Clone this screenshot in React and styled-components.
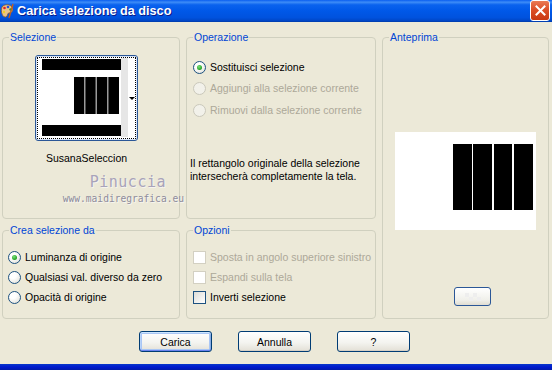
import styled, { createGlobalStyle } from "styled-components";

const GlobalStyle = createGlobalStyle`
  html, body { margin: 0; padding: 0; }
  body {
    width: 552px;
    height: 370px;
    overflow: hidden;
    background: #ece9d8;
    font-family: "Liberation Sans", Arial, sans-serif;
  }
`;

const Window = styled.div`
  position: relative;
  display: flex;
  flex-direction: column;
  height: 370px;
`;

const TitleBar = styled.div`
  flex-shrink: 0;
  height: 22px;
  display: flex;
  align-items: center;
  padding-right: 2px;
  background: linear-gradient(
    to bottom,
    #0a5ef0 0%,
    #3d8cf7 10%,
    #0a62ee 22%,
    #0058e8 50%,
    #0052de 80%,
    #0046c6 94%,
    #003aa8 100%
  );
`;

const AppIcon = styled.svg`
  width: 14px;
  height: 16px;
  margin-left: 0;
`;

const TitleText = styled.span`
  flex: 1;
  margin-left: 3px;
  color: #fff;
  font-size: 12.7px;
  font-weight: bold;
  text-shadow: 1px 1px 0 #0a1a8a;
`;

const CloseButton = styled.div`
  width: 18px;
  height: 19px;
  margin-top: -2px;
  border: 1px solid #fff;
  border-radius: 3px;
  background: linear-gradient(to bottom, #ea7a55, #dc4f28 45%, #c93812);
  display: flex;
  align-items: center;
  justify-content: center;
`;

const Body = styled.div`
  flex: 1;
  display: flex;
  flex-direction: column;
  padding: 9px 5px 0 2px;
`;

const Grid = styled.div`
  display: grid;
  grid-template-columns: 178px 190px 167px;
  grid-template-rows: 188px 95px;
  column-gap: 6px;
  row-gap: 5px;
`;

const Group = styled.fieldset`
  grid-column: ${(p) => p.$col};
  grid-row: ${(p) => p.$row};
  margin: 0;
  padding: 0;
  min-width: 0;
  border: 1px solid #d0d0bf;
  border-radius: 4px;
  display: flex;
  flex-direction: column;
  align-items: ${(p) => p.$align || "stretch"};
`;

const Legend = styled.legend`
  margin-left: 6px;
  padding: 0 1px;
  font-size: 10.5px;
  line-height: 13px;
  color: #0046d5;
`;

const ThumbColumn = styled.div`
  display: flex;
  flex-direction: column;
  align-items: center;
  align-self: flex-start;
  margin: 11px 0 0 32px;
  width: 103px;
`;

const ThumbBox = styled.div`
  width: 103px;
  height: 86px;
  box-sizing: border-box;
  padding: 1px;
  border: 1px solid #2b5797;
  border-radius: 3px;
  background: #fff;
  box-shadow: inset 0 0 0 1px #d6e2f5;
`;

const DottedFrame = styled.div`
  height: 100%;
  box-sizing: border-box;
  border: 1px dotted #000;
  display: flex;
`;

const ArrowCol = styled.div`
  flex: 1;
  display: flex;
  align-items: center;
  justify-content: center;
  &::after {
    content: "";
    border-left: 3px solid transparent;
    border-right: 3px solid transparent;
    border-top: 3px solid #000;
  }
`;

const ThumbName = styled.div`
  margin-top: 11px;
  font-size: 10.5px;
  line-height: 13px;
  color: #000;
`;

const OptionList = styled.div`
  display: flex;
  flex-direction: column;
  gap: ${(p) => p.$gap}px;
  padding: ${(p) => p.$top}px 0 0 ${(p) => p.$left}px;
`;

const Option = styled.div`
  display: flex;
  align-items: center;
  gap: 4px;
  height: 13px;
  font-size: 10.5px;
  line-height: 13px;
  white-space: nowrap;
  color: ${(p) => (p.$disabled ? "#aca899" : "#000")};
`;

const Radio = styled.span`
  flex-shrink: 0;
  width: 13px;
  height: 13px;
  box-sizing: border-box;
  border-radius: 50%;
  border: 1px solid ${(p) => (p.$disabled ? "#cac8bb" : "#1c5180")};
  background: ${(p) =>
    p.$disabled
      ? "#f2f1ea"
      : "radial-gradient(circle at 35% 30%, #ffffff 30%, #dcdcd3 100%)"};
  display: flex;
  align-items: center;
  justify-content: center;
  &::after {
    content: "";
    display: ${(p) => (p.$checked ? "block" : "none")};
    width: 5px;
    height: 5px;
    border-radius: 50%;
    background: radial-gradient(circle at 40% 35%, #7be07b, #21a121 70%);
  }
`;

const Check = styled.span`
  flex-shrink: 0;
  width: 13px;
  height: 13px;
  box-sizing: border-box;
  border: 1px solid ${(p) => (p.$disabled ? "#d3d0c2" : "#1c5180")};
  background: ${(p) =>
    p.$disabled ? "#fff" : "linear-gradient(135deg, #dcdcd7, #ffffff)"};
`;

const InfoText = styled.div`
  margin: 40px 0 0 3px;
  font-size: 10.5px;
  line-height: 13px;
  color: #000;
`;

const PreviewBox = styled.svg`
  margin-top: 88px;
  width: 141px;
  height: 98px;
  display: block;
`;

const SmallButton = styled.div`
  margin: 57px 0 0 14px;
  width: 37px;
  height: 19px;
  box-sizing: border-box;
  border: 1px solid #2b5797;
  border-radius: 3px;
  background: linear-gradient(to bottom, #ffffff, #f0f0ea 70%, #e0ddd2);
  display: flex;
  align-items: center;
  justify-content: center;
`;

const ButtonRow = styled.div`
  display: flex;
  justify-content: center;
  gap: 26px;
  margin-top: 12px;
`;

const DlgButton = styled.button`
  width: 73px;
  height: 21px;
  padding: 0;
  font-family: "Liberation Sans", Arial, sans-serif;
  font-size: 10.5px;
  color: #000;
  border: 1px solid #003c74;
  border-radius: 3px;
  background: linear-gradient(to bottom, #ffffff, #f4f4f0 55%, #e3e0d6);
  box-shadow: ${(p) =>
    p.$primary
      ? "inset 0 1px 0 #cee7ff, inset 0 -1px 0 #6982ee, inset 1px 0 0 #b8d3f9, inset -1px 0 0 #89ade4, inset 0 0 0 2px #a9c6f5"
      : "inset 0 -1px 0 #d6d0c5"};
`;

const BottomFrame = styled.div`
  margin-top: auto;
  height: 6px;
  background: linear-gradient(to bottom, #0838c8, #0019cf 50%, #001aa8);
`;

const Watermark = styled.div`
  position: absolute;
  left: 62px;
  top: 172px;
  width: 122px;
  display: flex;
  flex-direction: column;
  align-items: flex-end;
  font-family: "DejaVu Sans Mono", "Liberation Mono", monospace;
  pointer-events: none;
`;

const WatermarkName = styled.span`
  margin-right: 18px;
  font-size: 15px;
  line-height: 20px;
  letter-spacing: 0.5px;
  color: #a8a3ba;
  text-shadow: 1px 1px 0 #f6f4ee;
`;

const WatermarkUrl = styled.span`
  font-size: 9.6px;
  line-height: 13px;
  color: #8e8c9c;
  text-shadow: 1px 1px 0 #f8f6f0;
`;

function ThumbImage() {
  return (
    <svg width="90" height="79" viewBox="0 0 90 79">
      <rect width="90" height="79" fill="#fff" />
      <rect x="83" y="0" width="7" height="79" fill="#e6e6e6" />
      <rect x="4" y="1" width="79" height="11" fill="#000" />
      <rect x="36" y="19" width="45" height="37" fill="#9a9a9a" />
      <rect x="36" y="19" width="10" height="37" fill="#000" />
      <rect x="47.5" y="19" width="10" height="37" fill="#000" />
      <rect x="59" y="19" width="10" height="37" fill="#000" />
      <rect x="70.5" y="19" width="10.5" height="37" fill="#000" />
      <rect x="4" y="67" width="79" height="11" fill="#000" />
    </svg>
  );
}

export default function App() {
  return (
    <Window>
      <GlobalStyle />
      <TitleBar>
        <AppIcon viewBox="0 0 14 16">
          <path
            d="M2 4 C4 1 10 1 12 4 C14 7 12 10 9 10 C7 10 8 13 6 14 C3 15 0 9 2 4 Z"
            fill="#e8c48a"
            stroke="#8a5a2a"
            strokeWidth="0.8"
          />
          <circle cx="4.5" cy="5" r="1.3" fill="#e02020" />
          <circle cx="8" cy="4" r="1.3" fill="#2050e0" />
          <circle cx="10.5" cy="6.5" r="1.2" fill="#20a030" />
          <circle cx="4" cy="9" r="1.2" fill="#f0d020" />
          <path d="M9 15 L13 1" stroke="#c06020" strokeWidth="1.4" />
        </AppIcon>
        <TitleText>Carica selezione da disco</TitleText>
        <CloseButton>
          <svg width="11" height="11" viewBox="0 0 11 11">
            <path
              d="M1.5 1.5 L9.5 9.5 M9.5 1.5 L1.5 9.5"
              stroke="#fff"
              strokeWidth="2"
              strokeLinecap="square"
            />
          </svg>
        </CloseButton>
      </TitleBar>

      <Body>
        <Grid>
          <Group $col={1} $row={1}>
            <Legend>Selezione</Legend>
            <ThumbColumn>
              <ThumbBox>
                <DottedFrame>
                  <ThumbImage />
                  <ArrowCol />
                </DottedFrame>
              </ThumbBox>
              <ThumbName>SusanaSeleccion</ThumbName>
            </ThumbColumn>
          </Group>

          <Group $col={2} $row={1}>
            <Legend>Operazione</Legend>
            <OptionList $gap={8.5} $top={16.5} $left={6}>
              <Option>
                <Radio $checked />
                Sostituisci selezione
              </Option>
              <Option $disabled>
                <Radio $disabled />
                Aggiungi alla selezione corrente
              </Option>
              <Option $disabled>
                <Radio $disabled />
                Rimuovi dalla selezione corrente
              </Option>
            </OptionList>
            <InfoText>
              Il rettangolo originale della selezione
              <br />
              intersecherà completamente la tela.
            </InfoText>
          </Group>

          <Group $col={3} $row="1 / span 2" $align="center">
            <Legend>Anteprima</Legend>
            <PreviewBox viewBox="0 0 141 98">
              <rect width="141" height="98" fill="#fff" />
              <rect x="58" y="12" width="19" height="66" fill="#000" />
              <rect x="78" y="12" width="19" height="66" fill="#000" />
              <rect x="99" y="12" width="18" height="66" fill="#000" />
              <rect x="119" y="12" width="19" height="66" fill="#000" />
            </PreviewBox>
            <SmallButton>
              <svg width="16" height="8" viewBox="0 0 16 8">
                <rect x="0" y="0" width="4" height="4" fill="#eeeeee" />
                <rect x="8" y="0" width="4" height="4" fill="#eeeeee" />
                <rect x="4" y="4" width="4" height="4" fill="#eeeeee" />
                <rect x="12" y="4" width="4" height="4" fill="#eeeeee" />
              </svg>
            </SmallButton>
          </Group>

          <Group $col={1} $row={2}>
            <Legend>Crea selezione da</Legend>
            <OptionList $gap={7} $top={13.5} $left={5}>
              <Option>
                <Radio $checked />
                Luminanza di origine
              </Option>
              <Option>
                <Radio />
                Qualsiasi val. diverso da zero
              </Option>
              <Option>
                <Radio />
                Opacità di origine
              </Option>
            </OptionList>
          </Group>

          <Group $col={2} $row={2}>
            <Legend>Opzioni</Legend>
            <OptionList $gap={7} $top={13.5} $left={6}>
              <Option $disabled>
                <Check $disabled />
                Sposta in angolo superiore sinistro
              </Option>
              <Option $disabled>
                <Check $disabled />
                Espandi sulla tela
              </Option>
              <Option>
                <Check />
                Inverti selezione
              </Option>
            </OptionList>
          </Group>
        </Grid>

        <ButtonRow>
          <DlgButton $primary>Carica</DlgButton>
          <DlgButton>Annulla</DlgButton>
          <DlgButton>?</DlgButton>
        </ButtonRow>
      </Body>

      <BottomFrame />

      <Watermark>
        <WatermarkName>Pinuccia</WatermarkName>
        <WatermarkUrl>www.maidiregrafica.eu</WatermarkUrl>
      </Watermark>
    </Window>
  );
}
